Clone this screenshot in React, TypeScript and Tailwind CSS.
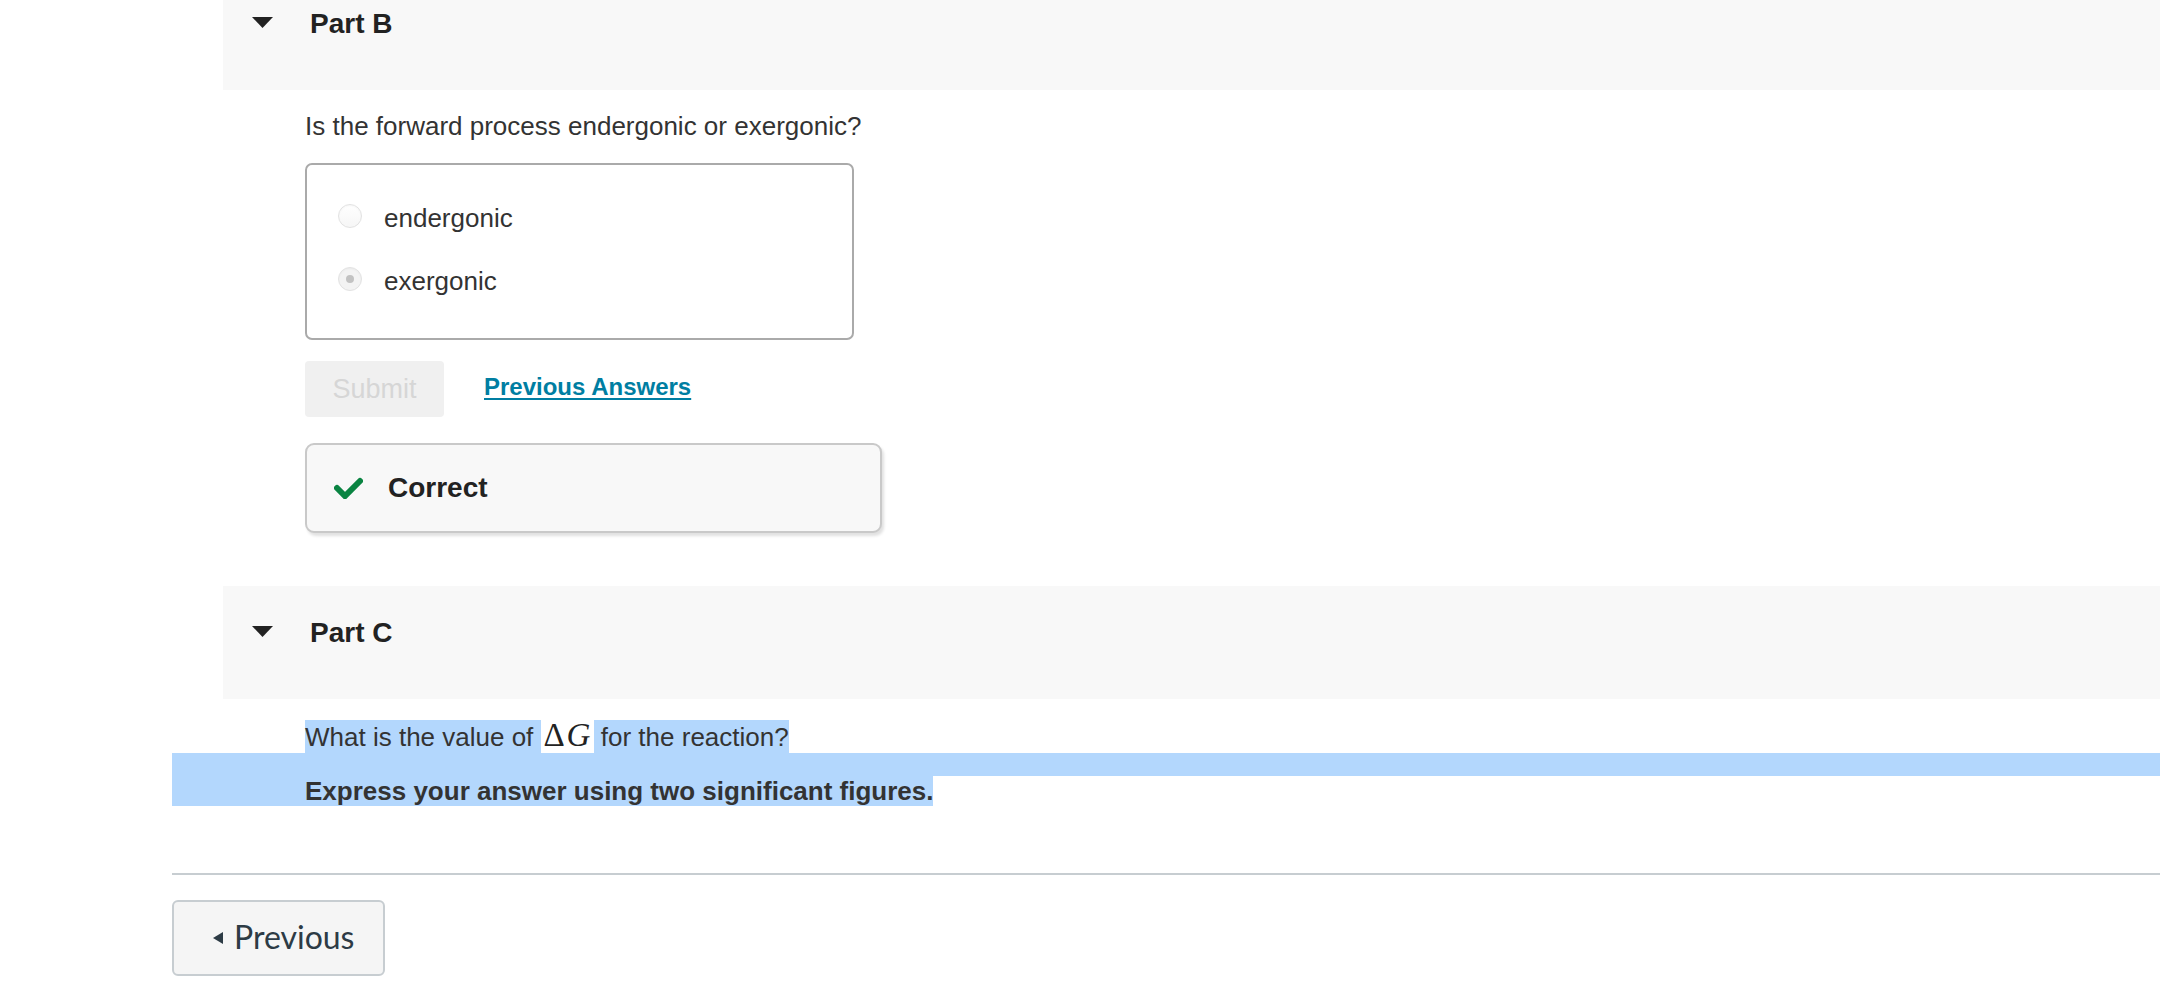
import React from "react";

function PartHeader({ label, className = "" }: { label: string; className?: string }) {
  return (
    <div className={`ml-[51px] flex h-[113px] shrink-0 items-start bg-[#f8f8f8] pt-[31px] ${className}`}>
      <svg width="21" height="11" viewBox="0 0 21 11" className="ml-[29px] mt-[9px]" aria-hidden="true">
        <polygon points="0,0 21,0 10.5,11" fill="#222" />
      </svg>
      <h2 className="ml-[37px] text-[28px] font-bold leading-[32px] text-[#222]">{label}</h2>
    </div>
  );
}

function Radio({ checked = false }: { checked?: boolean }) {
  return (
    <span
      className={`flex h-[24px] w-[24px] shrink-0 items-center justify-center rounded-full border border-[#e2e2e2] shadow-[inset_0_1px_2px_rgba(0,0,0,0.04)] ${
        checked ? "bg-[#f3f3f3]" : "bg-gradient-to-b from-white to-[#f6f6f6]"
      }`}
    >
      {checked && <span className="h-[8px] w-[8px] rounded-full bg-[#c2c2c2]" />}
    </span>
  );
}

const options = [
  { label: "endergonic", checked: false },
  { label: "exergonic", checked: true },
];

export default function App() {
  return (
    <div className="flex min-h-screen flex-col bg-white pl-[172px] font-['Liberation_Sans',Arial,sans-serif] text-[26px] leading-[30px] text-[#333]">
      {/* Part B, scrolled partly out of view */}
      <PartHeader label="Part B" className="-mt-[23px]" />

      <div className="flex flex-col items-start pl-[133px]">
        <p className="mt-[21px]">Is the forward process endergonic or exergonic?</p>

        <div className="mt-[22px] flex w-[549px] flex-col gap-[33px] rounded-[7px] border-2 border-[#aaaaaa] pb-[42px] pl-[31px] pt-[38px]">
          {options.map((o) => (
            <label key={o.label} className="flex items-start">
              <span className="mt-[1px]">
                <Radio checked={o.checked} />
              </span>
              <span className="ml-[22px]">{o.label}</span>
            </label>
          ))}
        </div>

        <div className="mt-[21px] flex items-center">
          <button
            disabled
            className="flex h-[56px] w-[139px] items-center justify-center rounded-[4px] bg-[#f0f0f0] text-[27px] text-[#d6d6d6]"
          >
            Submit
          </button>
          <a
            href="#"
            className="ml-[40px] -mt-[5px] text-[24px] font-bold text-[#007ea2] underline decoration-[2px] underline-offset-[3px]"
          >
            Previous Answers
          </a>
        </div>

        <div className="mt-[26px] flex h-[90px] w-[577px] items-center rounded-[9px] border-2 border-[#c9c9c9] bg-[#f8f8f8] pb-[1px] pl-[27px] shadow-[2px_3px_3px_rgba(0,0,0,0.12)]">
          <svg width="29" height="22" viewBox="0 0 29 22" aria-hidden="true">
            <polyline
              points="3,11 11,19 26,4"
              fill="none"
              stroke="#0a8442"
              strokeWidth="6"
              strokeLinecap="round"
              strokeLinejoin="miter"
            />
          </svg>
          <span className="ml-[25px] text-[28px] font-bold text-[#222]">Correct</span>
        </div>
      </div>

      <PartHeader label="Part C" className="mt-[53px]" />

      {/* question text, partly selected */}
      <div className="mt-[21px] flex pl-[133px]">
        <span className="h-[33px] bg-[#b3d7fd] pt-[2px]">{"What is the value of\u00a0"}</span>
        <span className="flex h-[33px] w-[53px] items-end bg-white pb-[3px] pl-[1px] font-['Liberation_Serif','Times_New_Roman',serif] text-[33px] leading-[30px] text-[#222]">
          <span className="inline-block w-[25px] text-center">Δ</span>
          <span className="inline-block w-[25px] italic">G</span>
        </span>
        <span className="h-[33px] bg-[#b3d7fd] pt-[2px]">{"\u00a0for the reaction?"}</span>
      </div>
      <div className="h-[23px] bg-[#b3d7fd]" />
      <div className="w-fit bg-[#b3d7fd] pl-[133px] font-bold">Express your answer using two significant figures.</div>

      <div className="mt-[67px] h-[2px] bg-[#c7cdd1]" />

      <div className="mt-[25px] pb-[28px]">
        <button className="flex h-[76px] w-[213px] items-center rounded-[6px] border-2 border-[#c7cdd1] bg-[#f5f5f5] pb-[2px] pl-[39px] font-['Lato',sans-serif] text-[32px] leading-[36px] text-[#2d3b45]">
          <svg width="10" height="12" viewBox="0 0 10 12" className="mt-[2px]" aria-hidden="true">
            <polygon points="10,0 10,12 0,6" fill="#2d3b45" />
          </svg>
          <span className="ml-[11px]">Previous</span>
        </button>
      </div>
    </div>
  );
}
